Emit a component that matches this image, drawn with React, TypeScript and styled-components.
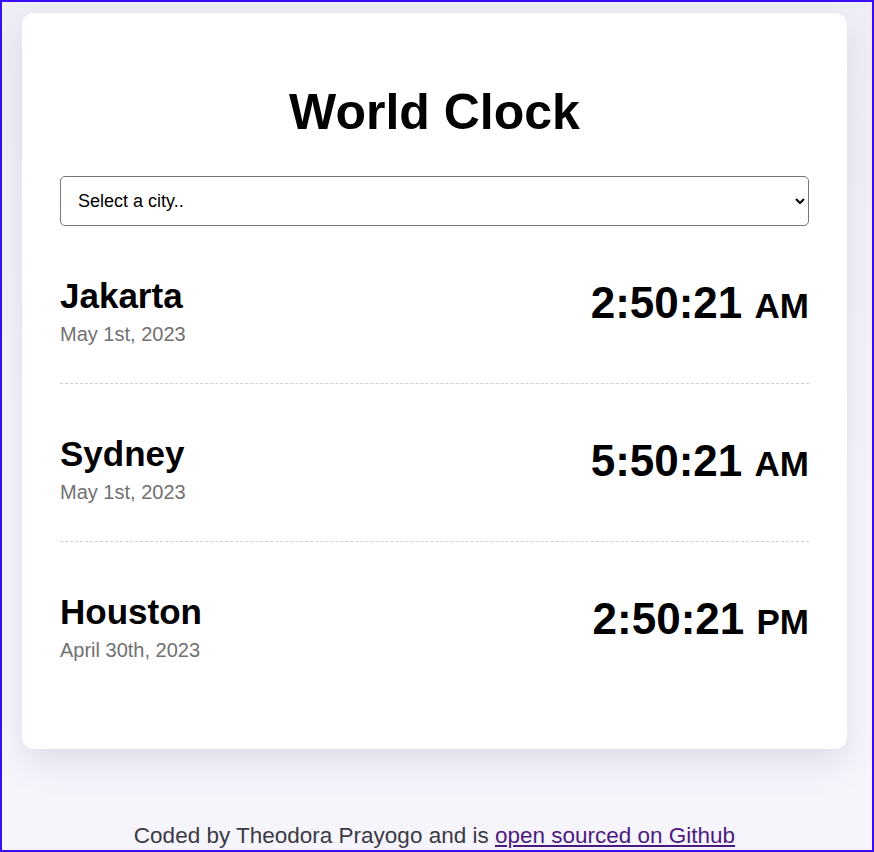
import React from "react";
import styled, { createGlobalStyle } from "styled-components";

const GlobalStyle = createGlobalStyle`
  html, body { margin: 0; padding: 0; }
  body { font-family: "Liberation Sans", Arial, sans-serif; background: #f6f5fb; }
`;

const Frame = styled.div`
  box-sizing: border-box;
  width: 874px;
  height: 852px;
  border: 2px solid #3a0ef5;
  overflow: hidden;
  background: linear-gradient(#efeef6, #f7f5fc 60%);
  padding: 11px 25px 0 20px;
  display: flex;
  flex-direction: column;
`;

const Card = styled.main`
  box-sizing: border-box;
  width: 825px;
  background: #fff;
  border-radius: 12px;
  box-shadow: 0 16px 34px rgba(60, 60, 100, 0.12);
  padding: 69px 38px 50px 38px;
`;

const Title = styled.h1`
  margin: 0 0 34px 0;
  text-align: center;
  font-size: 50px;
  font-weight: 700;
  line-height: 1.2;
  color: #000;
`;

const Select = styled.select`
  box-sizing: border-box;
  width: 100%;
  height: 50px;
  border: 1px solid #767676;
  border-radius: 5px;
  padding: 0 12px 0 13px;
  font-family: "Liberation Sans", Arial, sans-serif;
  font-size: 18px;
  color: #000;
  background: #fff;
`;

const List = styled.div`
  display: flex;
  flex-direction: column;
`;

const Row = styled.div<{ $last?: boolean }>`
  display: flex;
  justify-content: space-between;
  align-items: flex-start;
  padding: 46px 0 37px 0;
  border-bottom: ${(p) => (p.$last ? "none" : "1px dashed #cfcfcf")};
`;

const CityBlock = styled.div`
  display: flex;
  flex-direction: column;
`;

const CityName = styled.div`
  font-size: 35px;
  font-weight: 700;
  line-height: 48px;
  color: #000;
`;

const CityDate = styled.div`
  font-size: 20px;
  line-height: 24px;
  color: #717171;
  margin-top: 2px;
`;

const Time = styled.div`
  font-size: 44px;
  font-weight: 700;
  line-height: 54px;
  margin-top: 4px;
  color: #000;
`;

const Meridiem = styled.span`
  font-size: 35px;
`;

const Footer = styled.footer`
  text-align: center;
  margin-top: 74px;
  font-size: 22.5px;
  line-height: 26px;
  color: #3a3a44;
`;

const Link = styled.a`
  color: #4b1a7f;
  text-decoration: underline;
`;

const cities = [
  { name: "Jakarta", date: "May 1st, 2023", time: "2:50:21", ampm: "AM" },
  { name: "Sydney", date: "May 1st, 2023", time: "5:50:21", ampm: "AM" },
  { name: "Houston", date: "April 30th, 2023", time: "2:50:21", ampm: "PM" },
];

export default function App() {
  return (
    <>
      <GlobalStyle />
      <Frame>
        <Card>
          <Title>World Clock</Title>
          <Select defaultValue="">
            <option value="">Select a city..</option>
          </Select>
          <List>
            {cities.map((c, i) => (
              <Row key={c.name} $last={i === cities.length - 1}>
                <CityBlock>
                  <CityName>{c.name}</CityName>
                  <CityDate>{c.date}</CityDate>
                </CityBlock>
                <Time>
                  {c.time} <Meridiem>{c.ampm}</Meridiem>
                </Time>
              </Row>
            ))}
          </List>
        </Card>
        <Footer>
          Coded by Theodora Prayogo and is <Link href="#">open sourced on Github</Link>
        </Footer>
      </Frame>
    </>
  );
}
